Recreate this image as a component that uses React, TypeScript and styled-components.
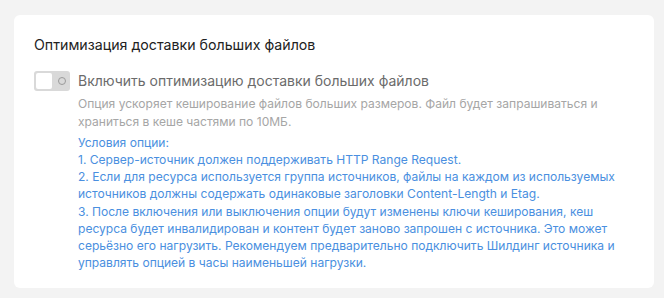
import React, { useState } from "react"
import styled, { createGlobalStyle } from "styled-components"

const GlobalStyle = createGlobalStyle`
  html, body {
    margin: 0;
    padding: 0;
    background: #f3f3f3;
  }
  body {
    font-family: Inter, "Noto Sans", sans-serif;
  }
`

const Page = styled.div`
  padding: 15px 10px 10px 14px;
`

const Card = styled.section`
  width: 640px;
  box-sizing: border-box;
  background: #fff;
  border-radius: 6px;
  padding: 20px 20px 17px 20px;
`

const Title = styled.div`
  font-size: 14.2px;
  line-height: 20px;
  color: #222;
  margin-bottom: 16px;
`

const Row = styled.div`
  display: flex;
  align-items: center;
  gap: 8px;
`

const Track = styled.button<{ $on: boolean }>`
  width: 36px;
  height: 20px;
  padding: 2px;
  border: none;
  border-radius: 3px;
  background: ${p => (p.$on ? "#4a8fe0" : "#d9d9d9")};
  display: flex;
  align-items: center;
  justify-content: ${p => (p.$on ? "flex-end" : "flex-start")};
  position: relative;
  cursor: pointer;
  flex-shrink: 0;
`

const Knob = styled.span`
  width: 16px;
  height: 16px;
  border-radius: 2px;
  background: #fff;
`

const OffMark = styled.span`
  position: absolute;
  right: 4px;
  top: 6px;
  width: 8px;
  height: 8px;
  border: 1px solid #9a9a9a;
  border-radius: 50%;
  box-sizing: border-box;
`

const Label = styled.div`
  font-size: 14px;
  line-height: 20px;
  color: #6b6b6b;
`

const Body = styled.div`
  padding-left: 44px;
  font-size: 12.05px;
`

const Hint = styled.p`
  margin: 4px 0 3px 0;
  color: #a6a6a6;
  line-height: 18px;
`

const Conditions = styled.p`
  margin: 0;
  color: #4a8fe0;
  line-height: 17.15px;
`

const conditions = [
  "Условия опции:",
  "1. Сервер-источник должен поддерживать HTTP Range Request.",
  "2. Если для ресурса используется группа источников, файлы на каждом из используемых источников должны содержать одинаковые заголовки Content-Length и Etag.",
  "3. После включения или выключения опции будут изменены ключи кеширования, кеш ресурса будет инвалидирован и контент будет заново запрошен с источника. Это может серьёзно его нагрузить. Рекомендуем предварительно подключить Шилдинг источника и управлять опцией в часы наименьшей нагрузки.",
]

const App = () => {
  const [on, setOn] = useState(false)

  return (
    <Page>
      <GlobalStyle />
      <Card>
        <Title>Оптимизация доставки больших файлов</Title>
        <Row>
          <Track $on={on} onClick={() => setOn(!on)}>
            <Knob />
            {!on && <OffMark />}
          </Track>
          <Label>Включить оптимизацию доставки больших файлов</Label>
        </Row>
        <Body>
          <Hint>
            Опция ускоряет кеширование файлов больших размеров. Файл будет запрашиваться и
            храниться в кеше частями по 10МБ.
          </Hint>
          <Conditions>
            {conditions.map(line => (
              <React.Fragment key={line}>
                {line}
                <br />
              </React.Fragment>
            ))}
          </Conditions>
        </Body>
      </Card>
    </Page>
  )
}

export default App
